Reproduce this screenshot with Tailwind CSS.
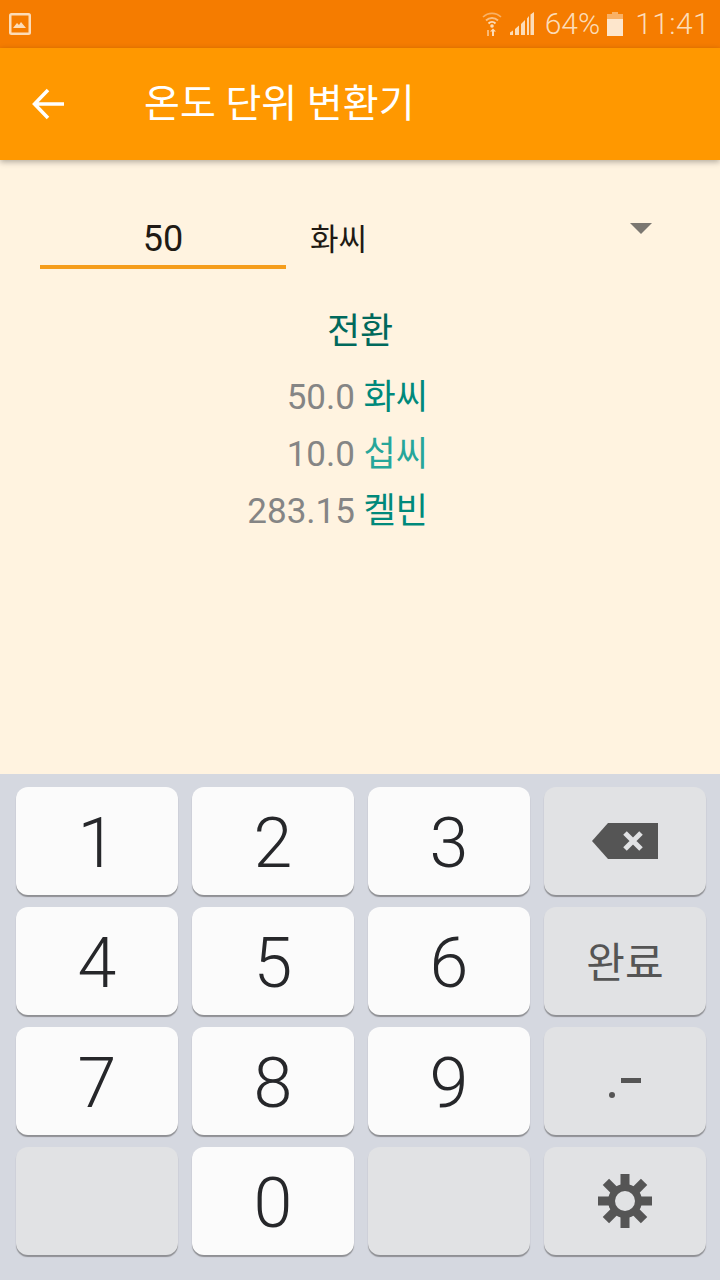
<!DOCTYPE html>
<html lang="ko">
<head>
  <meta charset="UTF-8" />
  <title>온도 단위 변환기</title>
  <script src="https://cdn.jsdelivr.net/npm/@tailwindcss/browser@4"></script>
</head>
<body class="w-[720px] h-[1280px] overflow-hidden bg-[#fff3e0] font-['Roboto','Noto_Sans_CJK_KR',sans-serif] flex flex-col">
  <!-- Status bar -->
  <div class="h-12 bg-[#f57c00] flex items-center pl-2 pr-[10px] text-[#fcdcb8] shrink-0">
    <svg class="w-6 h-6" viewBox="0 0 24 24">
      <rect x="1" y="1" width="22" height="22" rx="2.5" fill="#fcdcb8"/>
      <rect x="3.500" y="3.500" width="17" height="17" fill="#f57c00"/>
      <path d="M5 16l4-5 2 2 2-3 5 6z" fill="#fcdcb8"/>
    </svg>
    <div class="ml-auto flex items-center">
      <svg class="w-5 h-6 mr-2" viewBox="0 0 20 24" fill="none" stroke="#fcdcb8">
        <path d="M1 5a13 13 0 0 1 18 0" stroke-width="1.600" opacity=".55"/>
        <path d="M4 8.500a8.500 8.500 0 0 1 12 0" stroke-width="1.800" opacity=".7"/>
        <path d="M6.500 11.500a5 5 0 0 1 7 0" stroke-width="2"/>
        <circle cx="10" cy="14" r="1.800" fill="#fcdcb8" stroke="none"/>
        <path d="M6 18v6" stroke-width="1.800" opacity=".7"/>
        <path d="M11 24v-5" stroke-width="2"/>
        <path d="M8 19.500l3-3 3 3z" fill="#fcdcb8" stroke="none"/>
      </svg>
      <svg class="w-6 h-6 mr-[11px]" viewBox="0 0 24 24" fill="#fcdcb8">
        <path d="M0 20.500l3-2V23H0zM5 17l4-3.500V23H5zM11 12l4-4v15h-4zM17 6.500L19 4v19h-2zM20.500 2.500L24 0v23h-3.500z"/>
      </svg>
      <span class="text-[30px] leading-none font-light mr-[7px]">64%</span>
      <svg class="w-4 h-6 mr-3" viewBox="0 0 16 24">
        <path d="M5 0h6v2h5v5H0V2h5z" fill="#fcdcb8" opacity=".55"/>
        <path d="M0 7h16v17H0z" fill="#fde6cc"/>
      </svg>
      <span class="text-[30px] leading-none font-light tracking-[0.4px]">11:41</span>
    </div>
  </div>

  <!-- Toolbar -->
  <header class="h-28 bg-[#ff9800] flex items-center shrink-0 shadow-[0_2px_6px_rgba(0,0,0,0.3)] relative">
    <svg class="w-8 h-8 ml-8" viewBox="0 0 32 32" fill="none" stroke="white" stroke-width="3.500">
      <path d="M32 16H3M16 2L2.500 16 16 30"/>
    </svg>
    <h1 class="ml-[80px] text-[39px] leading-none text-white font-normal">온도 단위 변환기</h1>
  </header>

  <!-- Content -->
  <main class="flex-1 flex flex-col">
    <div class="flex pl-10 pr-[68px] pt-[40px]">
      <div class="w-[246px] h-[69px] border-b-4 border-[#f59d1c] text-center text-[36px] text-[#211a14] leading-[78px]">50</div>
      <div class="flex-1 flex items-start pl-6 text-[#211a14]">
        <span class="text-[31px] leading-[79px]">화씨</span>
        <span class="ml-auto mt-[23px] border-x-[11px] border-x-transparent border-t-[11px] border-t-[#7b7771]"></span>
      </div>
    </div>
    <h2 class="mt-[29px] text-center text-[36px] leading-[48px] text-[#00695c] font-normal">전환</h2>
    <div class="mt-[13px] pr-[292px] flex flex-col items-end text-[35px] leading-[57px] text-[#858585]">
      <div>50.0 <span class="text-[#00897b]">화씨</span></div>
      <div>10.0 <span class="text-[#26a69a]">섭씨</span></div>
      <div>283.15 <span class="text-[#00897b]">켈빈</span></div>
    </div>
  </main>

  <!-- Keypad -->
  <section class="h-[506px] bg-[#d5d8e0] shrink-0 grid grid-cols-[repeat(4,162px)] grid-rows-[repeat(4,108px)] gap-x-[14px] gap-y-3 pl-4 pt-[13px] text-[#26272a] text-[70px] font-light">
    <div class="bg-[#fbfbfb] rounded-xl shadow-[0_2px_1px_#8f9094] flex items-center justify-center pt-1">1</div>
    <div class="bg-[#fbfbfb] rounded-xl shadow-[0_2px_1px_#8f9094] flex items-center justify-center pt-1">2</div>
    <div class="bg-[#fbfbfb] rounded-xl shadow-[0_2px_1px_#8f9094] flex items-center justify-center pt-1">3</div>
    <div class="bg-[#e1e2e4] rounded-xl shadow-[0_2px_1px_#8f9094] flex items-center justify-center">
      <svg class="w-[66px] h-9" viewBox="0 0 66 36">
        <path d="M16 0h50v36H16L0 18z" fill="#555555"/>
        <path d="M33 10l16 16M49 10L33 26" stroke="#e1e2e4" stroke-width="5" fill="none"/>
      </svg>
    </div>
    <div class="bg-[#fbfbfb] rounded-xl shadow-[0_2px_1px_#8f9094] flex items-center justify-center pt-1">4</div>
    <div class="bg-[#fbfbfb] rounded-xl shadow-[0_2px_1px_#8f9094] flex items-center justify-center pt-1">5</div>
    <div class="bg-[#fbfbfb] rounded-xl shadow-[0_2px_1px_#8f9094] flex items-center justify-center pt-1">6</div>
    <div class="bg-[#e1e2e4] rounded-xl shadow-[0_2px_1px_#8f9094] flex items-center justify-center pt-1 text-[42px] text-[#555555] font-normal">완료</div>
    <div class="bg-[#fbfbfb] rounded-xl shadow-[0_2px_1px_#8f9094] flex items-center justify-center pt-1">7</div>
    <div class="bg-[#fbfbfb] rounded-xl shadow-[0_2px_1px_#8f9094] flex items-center justify-center pt-1">8</div>
    <div class="bg-[#fbfbfb] rounded-xl shadow-[0_2px_1px_#8f9094] flex items-center justify-center pt-1">9</div>
    <div class="bg-[#e1e2e4] rounded-xl shadow-[0_2px_1px_#8f9094] flex items-center justify-center pt-3">
      <svg class="w-8 h-[22px]" viewBox="0 0 32 22" fill="#555555">
        <circle cx="3" cy="19" r="3"/>
        <rect x="12" y="2" width="20" height="5"/>
      </svg>
    </div>
    <div class="bg-[#e1e2e4] rounded-xl shadow-[0_2px_1px_#8f9094]"></div>
    <div class="bg-[#fbfbfb] rounded-xl shadow-[0_2px_1px_#8f9094] flex items-center justify-center pt-1">0</div>
    <div class="bg-[#e1e2e4] rounded-xl shadow-[0_2px_1px_#8f9094]"></div>
    <div class="bg-[#e1e2e4] rounded-xl shadow-[0_2px_1px_#8f9094] flex items-center justify-center">
      <svg class="w-[54px] h-[54px]" viewBox="0 0 54 54">
        <g fill="#555555">
          <rect x="22.500" y="0" width="9" height="54"/>
          <rect x="22.500" y="0" width="9" height="54" transform="rotate(45 27 27)"/>
          <rect x="22.500" y="0" width="9" height="54" transform="rotate(90 27 27)"/>
          <rect x="22.500" y="0" width="9" height="54" transform="rotate(135 27 27)"/>
        </g>
        <circle cx="27" cy="27" r="17" fill="#555555"/>
        <circle cx="27" cy="27" r="10" fill="#e1e2e4"/>
      </svg>
    </div>
  </section>
</body>
</html>
